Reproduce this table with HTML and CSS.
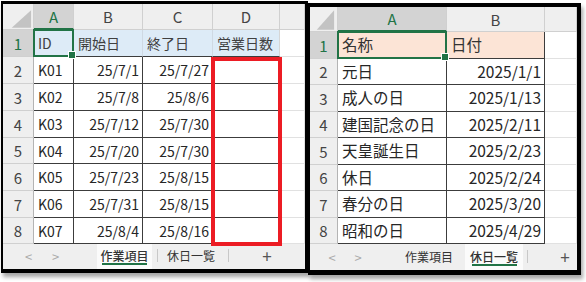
FILE: index.html
```html
<!DOCTYPE html>
<html lang="ja">
<head>
<meta charset="utf-8">
<title>作業項目 / 休日一覧</title>
<link rel="stylesheet" href="styles.css">
</head>
<body>
<div class="wrap">
  <section class="sheet sheet-work">
    <div class="grid">
      <div class="c h corner"><svg width="31" height="26" viewBox="0 0 31 26"><polygon points="29,6 29,24 9,24" fill="#c3c3c3"/></svg></div>
      <div class="c h sel">A</div><div class="c h">B</div><div class="c h">C</div><div class="c h">D</div><div class="c h"></div>

      <div class="c h rn selr">1</div>
      <div class="c blue">ID</div><div class="c blue">開始日</div><div class="c blue">終了日</div><div class="c blue last">営業日数</div><div class="c"></div>

      <div class="c h rn">2</div><div class="c b">K01</div><div class="c b r">25/7/1</div><div class="c b r">25/7/27</div><div class="c b"></div><div class="c"></div>
      <div class="c h rn">3</div><div class="c b">K02</div><div class="c b r">25/7/8</div><div class="c b r">25/8/6</div><div class="c b"></div><div class="c"></div>
      <div class="c h rn">4</div><div class="c b">K03</div><div class="c b r">25/7/12</div><div class="c b r">25/7/30</div><div class="c b"></div><div class="c"></div>
      <div class="c h rn">5</div><div class="c b">K04</div><div class="c b r">25/7/20</div><div class="c b r">25/7/30</div><div class="c b"></div><div class="c"></div>
      <div class="c h rn">6</div><div class="c b">K05</div><div class="c b r">25/7/23</div><div class="c b r">25/8/15</div><div class="c b"></div><div class="c"></div>
      <div class="c h rn">7</div><div class="c b">K06</div><div class="c b r">25/7/31</div><div class="c b r">25/8/15</div><div class="c b"></div><div class="c"></div>
      <div class="c h rn">8</div><div class="c b">K07</div><div class="c b r">25/8/4</div><div class="c b r">25/8/16</div><div class="c b"></div><div class="c"></div>

      <div class="cursor"></div>
      <div class="mark"></div>
    </div>
    <div class="tabs tabs-work">
      <div class="nav"><span>&lt;</span><span>&gt;</span></div>
      <div class="tab active t1">作業項目</div>
      <div class="sep"></div>
      <div class="tab t2">休日一覧</div>
      <div class="sep"></div>
      <div class="add">+</div>
    </div>
  </section>

  <section class="sheet sheet-hol">
    <div class="grid">
      <div class="c h corner"><svg width="28" height="25" viewBox="0 0 28 25"><polygon points="25,3 25,23 7,23" fill="#c3c3c3"/></svg></div>
      <div class="c h sel">A</div><div class="c h">B</div><div class="c h"></div>

      <div class="c h rn selr">1</div><div class="c b peach">名称</div><div class="c b peach">日付</div><div class="c"></div>
      <div class="c h rn">2</div><div class="c b">元日</div><div class="c b r">2025/1/1</div><div class="c"></div>
      <div class="c h rn">3</div><div class="c b">成人の日</div><div class="c b r">2025/1/13</div><div class="c"></div>
      <div class="c h rn">4</div><div class="c b">建国記念の日</div><div class="c b r">2025/2/11</div><div class="c"></div>
      <div class="c h rn">5</div><div class="c b">天皇誕生日</div><div class="c b r">2025/2/23</div><div class="c"></div>
      <div class="c h rn">6</div><div class="c b">休日</div><div class="c b r">2025/2/24</div><div class="c"></div>
      <div class="c h rn">7</div><div class="c b">春分の日</div><div class="c b r">2025/3/20</div><div class="c"></div>
      <div class="c h rn">8</div><div class="c b">昭和の日</div><div class="c b r">2025/4/29</div><div class="c"></div>

      <div class="cursor"></div>
    </div>
    <div class="tabs tabs-hol">
      <div class="nav"><span>&lt;</span><span>&gt;</span></div>
      <div class="tab t1">作業項目</div>
      <div class="tab active t2">休日一覧</div>
      <div class="sep"></div>
      <div class="add">+</div>
    </div>
  </section>
</div>
</body>
</html>
```

FILE: styles.css
```css
* { box-sizing: border-box; }

html, body {
  margin: 0;
  background: #fff;
}

body {
  font-family: "Noto Sans CJK JP", "Noto Sans", sans-serif;
  color: #262626;
}

.wrap {
  display: flex;
  align-items: flex-start;
  width: 586px;
  height: 282px;
}

.sheet {
  display: flex;
  flex-direction: column;
  background: #fff;
  border-style: solid;
  border-color: #000;
  box-shadow: 2px 4px 4px rgba(0, 0, 0, 0.35);
}

.sheet-work {
  margin: 1px 0 0 1px;
  border-width: 3px 3px 4px 2px;
  font-size: 14px;
}

.sheet-hol {
  margin-top: 3px;
  border-width: 4px 4px 5px 2px;
  font-size: 15.5px;
}

.grid {
  display: grid;
  position: relative;
}

.sheet-work .grid {
  grid-template-columns: 31px 40px 69px 70px 67px 25px;
  grid-template-rows: 26px 27px 27px 27px 27px 26px 27px 27px 26px;
}

.sheet-hol .grid {
  grid-template-columns: 28px 109px 98px 32px;
  grid-template-rows: 25px 27px 26px 27px 26px 27px 26px 27px 26px;
}

/* cells */
.c {
  display: flex;
  align-items: center;
  padding: 0 3px 0 4px;
  white-space: nowrap;
  overflow: hidden;
  border-right: 1px solid #e1e1e1;
  border-bottom: 1px solid #e1e1e1;
  line-height: 1;
}

.c.r { justify-content: flex-end; }

.c.h {
  justify-content: center;
  padding: 0;
  background: #efefef;
  color: #444;
  font-size: 15px;
  border-color: #d0d0d0;
}

.c.h.rn { border-right-color: #b4b4b4; }

.c.corner {
  align-items: stretch;
  justify-content: flex-start;
}

.c.sel {
  background: #d3d3d3;
  color: #217346;
  border-bottom: 2px solid #217346;
}

.c.selr {
  background: #d3d3d3;
  color: #217346;
}

.c.b {
  border-right-color: #3c3c3c;
  border-bottom-color: #3c3c3c;
}

.c.blue {
  background: #ddebf7;
  border-right-color: #cfd9e3;
  border-bottom-color: #3c3c3c;
  color: #404040;
}

.c.blue.last { border-right-color: #d6d6d6; }

.c.peach {
  background: #fce4d6;
  color: #333;
}

/* active cell outline with its fill handle, laid over A1 */
.cursor {
  position: absolute;
  grid-row: 2 / 3;
  grid-column: 2 / 3;
  top: -1px;
  left: -1px;
  right: 0;
  bottom: 0;
  border: 2px solid #217346;
  pointer-events: none;
  z-index: 2;
}

.cursor::after {
  content: "";
  position: absolute;
  right: -4px;
  bottom: -4px;
  width: 6px;
  height: 6px;
  background: #217346;
  border: 1px solid #fff;
}

/* red frame laid over D2:D8 */
.mark {
  position: absolute;
  grid-column: 5 / 6;
  grid-row: 3 / 10;
  top: 0;
  left: -2px;
  right: -2px;
  bottom: -2px;
  border: 4px solid #ec1c24;
  z-index: 2;
}

/* sheet tab strip */
.tabs {
  display: flex;
  align-items: stretch;
  background: #efefef;
  font-size: 12px;
  color: #333;
}

.tabs-work { height: 25px; }
.tabs-hol { height: 26px; }

.nav {
  display: flex;
  align-items: center;
  color: #aaa;
  font-size: 13px;
}

.nav span {
  display: block;
  text-align: center;
}

.tabs-work .nav { padding-left: 12px; }
.tabs-work .nav span { width: 27px; }
.tabs-hol .nav { padding-left: 9px; }
.tabs-hol .nav span { width: 26px; }

.tab {
  display: flex;
  align-items: center;
  justify-content: center;
  position: relative;
  padding-bottom: 2px;
}

.tab.active {
  background: #fbfbfb;
  font-weight: 500;
}

.tab.active::after {
  content: "";
  position: absolute;
  left: 50%;
  bottom: 4px;
  width: 45px;
  margin-left: -22.5px;
  height: 2px;
  background: #217346;
}

.tabs-work .t1 { margin-left: 28px; width: 55px; }
.tabs-work .t2 { width: 64px; margin-left: 1px; }
.tabs-hol .t1 { margin-left: 27px; width: 62px; }
.tabs-hol .t2 { margin-left: 5px; width: 58px; }

.sep {
  width: 1px;
  align-self: center;
  height: 13px;
  background: #c8c8c8;
  margin-bottom: 2px;
}

.tabs-work .sep { margin-left: 5px; }
.tabs-work .add { width: 76px; }
.tabs-hol .sep { margin-left: 4px; }
.tabs-hol .add { margin-left: auto; width: 24px; }

.add {
  display: flex;
  align-items: center;
  justify-content: center;
  font-size: 17px;
  color: #555;
  padding-bottom: 2px;
}
```
